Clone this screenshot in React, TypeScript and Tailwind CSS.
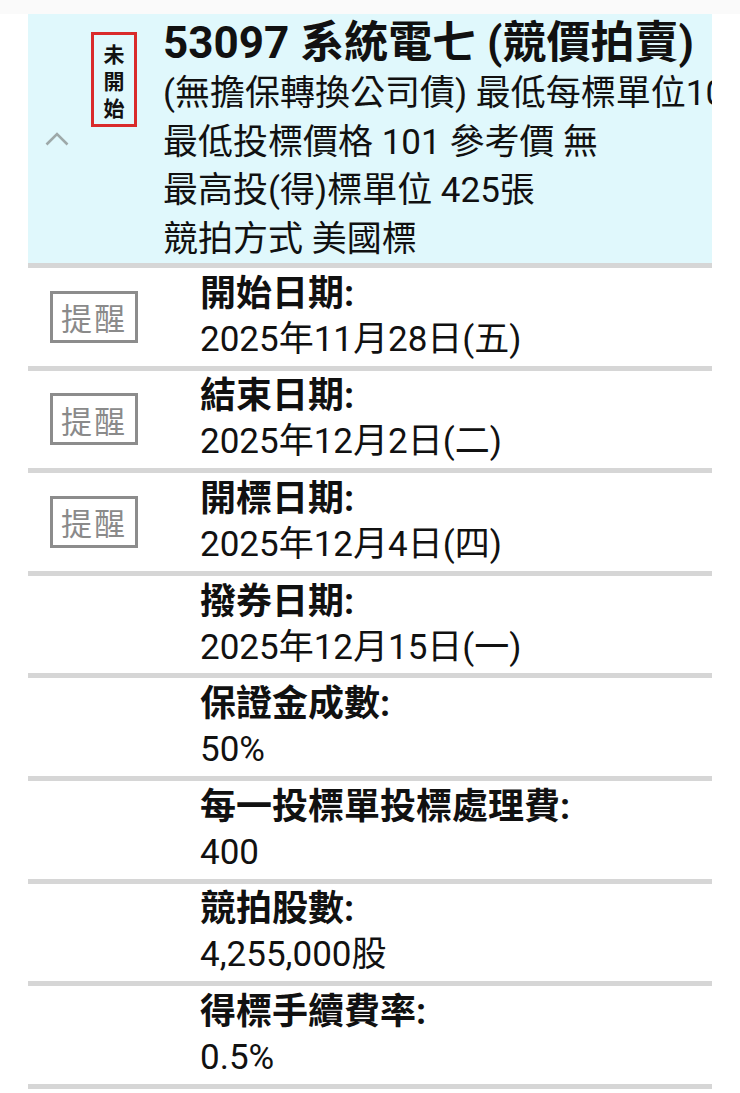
const font = "font-['Roboto','Noto_Sans_CJK_TC',sans-serif]";

type Row = { label: string; value: string; remind?: boolean };

const rows: Row[] = [
  { label: "開始日期:", value: "2025年11月28日(五)", remind: true },
  { label: "結束日期:", value: "2025年12月2日(二)", remind: true },
  { label: "開標日期:", value: "2025年12月4日(四)", remind: true },
  { label: "撥券日期:", value: "2025年12月15日(一)" },
  { label: "保證金成數:", value: "50%" },
  { label: "每一投標單投標處理費:", value: "400" },
  { label: "競拍股數:", value: "4,255,000股" },
  { label: "得標手續費率:", value: "0.5%" },
];

function Divider() {
  return <div className="h-[5px] bg-[#d6d6d6]" />;
}

function RemindButton() {
  return (
    <div className="ml-[22px] flex h-[52px] w-[88px] items-center justify-center border-[3px] border-[#8c8c8c] text-[31px] leading-none tracking-[2px] text-[#8a8a8a] font-['Noto_Sans_CJK_TC',serif]">
      提醒
    </div>
  );
}

function Header() {
  return (
    <div className="flex h-[249px] overflow-hidden bg-[#e0f8fc]">
      <div className="flex w-[58px] shrink-0 items-center justify-center">
        <svg width="24" height="14" viewBox="0 0 24 14" fill="none">
          <polyline points="1.5,12.5 12,2 22.5,12.5" stroke="#9ea9a9" strokeWidth="2.6" />
        </svg>
      </div>
      <div className="ml-[5px] mt-[18px] flex h-[95px] w-[46px] shrink-0 flex-col items-center justify-center gap-[5px] self-start border-[3px] border-[#d92b2b] text-[21px] font-bold leading-[22px] text-[#111] font-['Noto_Sans_CJK_TC',sans-serif]">
        <span>未</span>
        <span>開</span>
        <span>始</span>
      </div>
      <div className="ml-[26px] min-w-0 whitespace-nowrap text-[#111]">
        <div className="h-[56px] text-[44px] font-bold leading-[58px]">53097 系統電七 (競價拍賣)</div>
        <div className="text-[35px] leading-[48.5px]">(無擔保轉換公司債) 最低每標單位10張</div>
        <div className="text-[35px] leading-[48.5px]">最低投標價格 101 參考價 無</div>
        <div className="text-[35px] leading-[48.5px]">最高投(得)標單位 425張</div>
        <div className="text-[35px] leading-[48.5px]">競拍方式 美國標</div>
      </div>
    </div>
  );
}

export default function App() {
  return (
    <div className={`h-[1093px] w-[740px] overflow-hidden bg-white ${font}`}>
      <div className="h-[14px] bg-[#fafafa]" />
      <div className="ml-[28px] w-[684px]">
        <Header />
        <Divider />
        {rows.map((r) => (
          <div key={r.label}>
            <div className="flex h-[97.6px] items-center">
              <div className="flex w-[172px] shrink-0 items-center">{r.remind && <RemindButton />}</div>
              <div className="leading-[46px] text-[#111]">
                <div className="text-[36px] font-bold">{r.label}</div>
                <div className="text-[35px]">{r.value}</div>
              </div>
            </div>
            <Divider />
          </div>
        ))}
      </div>
    </div>
  );
}
